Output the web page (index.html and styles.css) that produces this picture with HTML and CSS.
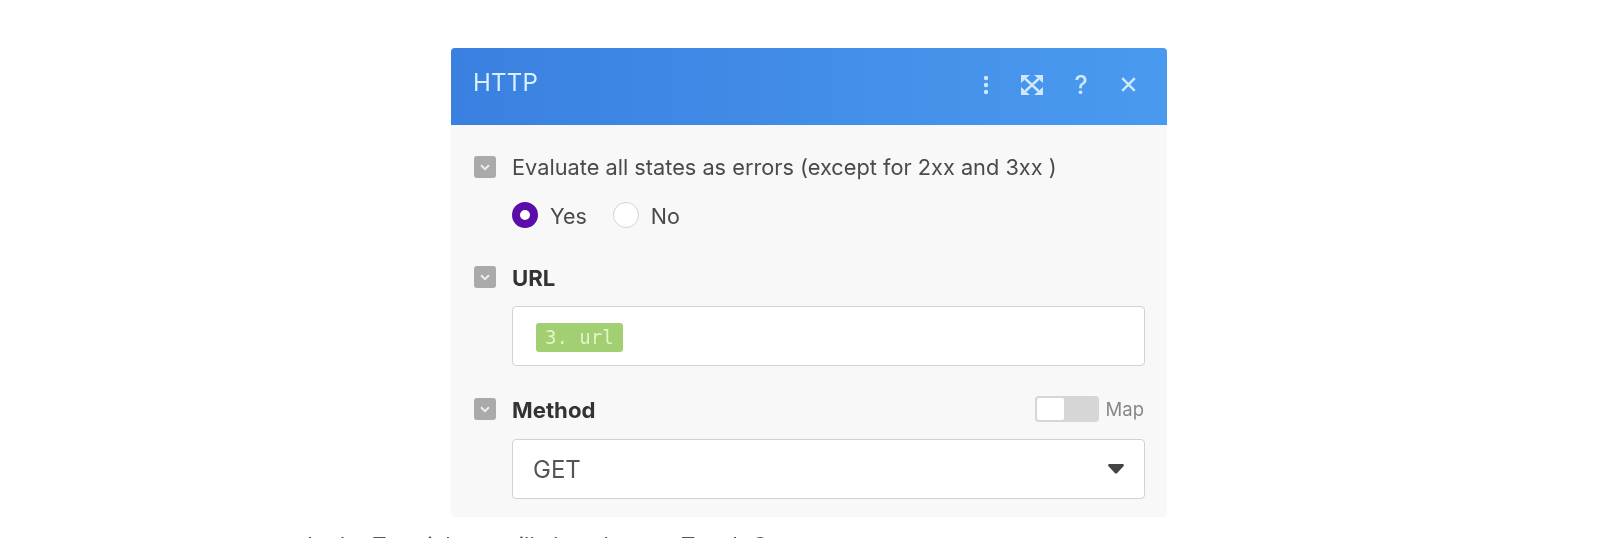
FILE: index.html
```html
<!DOCTYPE html>
<html lang="en">
<head>
<meta charset="utf-8">
<title>HTTP</title>
<link rel="stylesheet" href="styles.css">
</head>
<body>
<main class="page">
  <section class="dialog">
    <header class="head">
      <h1 class="title">HTTP</h1>
      <div class="tools">
        <svg class="tool dots" width="8" height="20" viewBox="0 0 8 20"><circle cx="4" cy="3" r="2.2"/><circle cx="4" cy="10" r="2.2"/><circle cx="4" cy="17" r="2.2"/></svg>
        <svg class="tool expand" width="22" height="20" viewBox="0 0 22 20"><path class="ln" d="M4 3.5l14 13M18 3.500L4 16.500"/><path d="M0 0h9L6 2.600 4 3.500 2.800 5.500 0 8zM22 0h-9l3 2.600 2 .9 1.200 2L22 8zM0 20h9l-3-2.600-2-.9-1.200-2L0 12zM22 20h-9l3-2.600 2-.9 1.200-2L22 12z"/></svg>
        <span class="help">?</span>
        <svg class="tool" width="15" height="15" viewBox="0 0 15 15"><path class="ln" d="M1.200 1.200l12.600 12.600M13.800 1.200L1.200 13.800"/></svg>
      </div>
    </header>
    <div class="body">
      <div class="field first">
        <div class="label-row">
          <span class="chk"><svg width="14" height="14" viewBox="0 0 14 14"><path d="M3 5.200l4 4 4-4"/></svg></span>
          <span class="label">Evaluate all states as errors (except for 2xx and 3xx )</span>
        </div>
        <div class="radios">
          <span class="radio on"></span><span class="opt">Yes</span>
          <span class="radio"></span><span class="opt">No</span>
        </div>
      </div>
      <div class="field">
        <div class="label-row">
          <span class="chk"><svg width="14" height="14" viewBox="0 0 14 14"><path d="M3 5.200l4 4 4-4"/></svg></span>
          <span class="label strong">URL</span>
        </div>
        <div class="input url"><span class="pill">3. url</span></div>
      </div>
      <div class="field">
        <div class="label-row">
          <span class="chk"><svg width="14" height="14" viewBox="0 0 14 14"><path d="M3 5.200l4 4 4-4"/></svg></span>
          <span class="label strong">Method</span>
          <span class="map"><span class="switch"><span class="knob"></span></span><span class="map-text">Map</span></span>
        </div>
        <div class="input select"><span class="value">GET</span><svg class="caret" width="16" height="10" viewBox="0 0 16 10"><path d="M1.500 0h13c1.200 0 1.800 1.200 1 2.200L9.200 9c-.7.8-1.700.8-2.400 0L.5 2.200C-.3 1.200.3 0 1.500 0z"/></svg></div>
      </div>
    </div>
  </section>
  <p class="cut">In the Tutorial, we will show how to Test It Out</p>
</main>
</body>
</html>
```
FILE: styles.css
```css
* { box-sizing: border-box; }
html, body { margin: 0; height: 538px; overflow: hidden; background: #fff; }
body { font-family: Inter, "Liberation Sans", sans-serif; color: #444; }
.page { display: flex; flex-direction: column; align-items: flex-start; padding: 48px 0 0 451px; }
.dialog { width: 716px; height: 469px; background: #f8f8f8; border-radius: 4px; filter: blur(0.4px); }
.head { height: 77px; display: flex; align-items: center; justify-content: space-between; padding: 0 31px 0 22px; background: linear-gradient(90deg, #3a80e0, #4a9af0); border-radius: 4px 4px 0 0; color: #d8f0ff; }
.title { margin: -8px 0 0; font-size: 24px; font-weight: 400; letter-spacing: .2px; }
.tools { display: flex; align-items: center; gap: 32px; margin-top: -4px; }
.tool { fill: #cfe8fc; display: block; }
.dots { margin-right: -1px; }
.expand { margin-right: -1px; }
.ln { stroke: #cfe8fc; stroke-width: 2.4; fill: none; }
.help { font-size: 25px; font-weight: 500; line-height: 24px; color: #cfe8fc; width: 14px; text-align: center; margin-right: 1px; }
.body { padding: 31px 22px 0 23px; }
.field { margin-bottom: 32px; }
.field.first { margin-bottom: 38px; }
.label-row { display: flex; align-items: center; height: 22px; }
.chk { width: 22px; height: 22px; border-radius: 3px; background: #aaa; display: flex; align-items: center; justify-content: center; margin-right: 16px; flex: none; }
.chk svg { fill: none; stroke: #eee; stroke-width: 2; }
.label { font-size: 21.75px; color: #4a4a4a; }
.label.strong { font-size: 22.2px; font-weight: 700; color: #333; }
.radios { display: flex; align-items: center; height: 26px; margin: 24px 0 0 38px; }
.radio { width: 26px; height: 26px; border-radius: 50%; background: #fff; border: 1px solid #d4d4d4; flex: none; }
.radio.on { background: #fff; border: 8px solid #5a0da8; }
.opt { font-size: 21.5px; color: #4a4a4a; margin: 2px 26px 0 12px; }
.input { margin: 18px 0 0 38px; height: 60px; background: #fff; border: 1px solid #d2d2d2; border-radius: 4px; display: flex; align-items: center; padding: 0 20px 0 22px; }
.url { padding: 2px 20px 0 23px; }
.pill { background: #a2cf72; color: #e2f5c8; border-radius: 3px; font-family: "DejaVu Sans Mono", monospace; font-size: 19px; height: 29px; line-height: 29px; padding: 0 9px; }
.select { justify-content: space-between; margin-top: 19px; padding: 0 20px 0 20px; }
.value { font-size: 24px; color: #555; }
.caret { fill: #444; display: block; }
.map { margin-left: auto; margin-right: 1px; display: flex; align-items: center; gap: 7px; }
.switch { width: 64px; height: 26px; background: #d6d6d6; border-radius: 4px; padding: 2px; display: block; }
.knob { display: block; width: 27px; height: 22px; background: #fff; border-radius: 2px; }
.map-text { font-size: 18.5px; color: #888; }
.cut { margin: 15px 0 0 -144px; font-size: 22.3px; color: #555; white-space: nowrap; filter: blur(0.4px); }
```
